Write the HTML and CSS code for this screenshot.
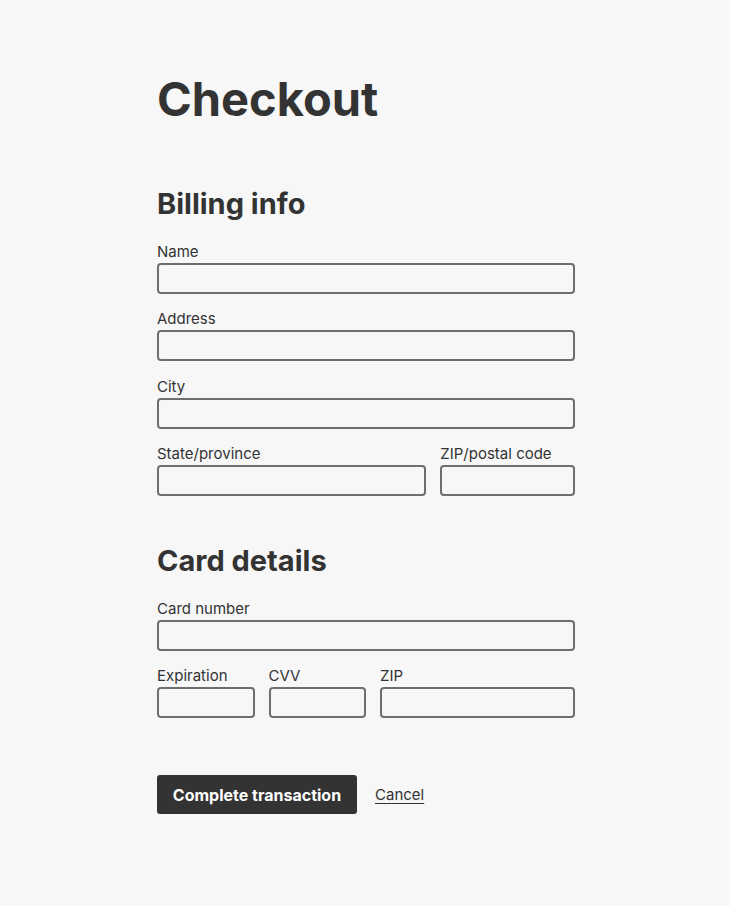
FILE: index.html
```html
<!DOCTYPE html>
<html lang="en">
<head>
<meta charset="utf-8">
<title>Checkout</title>
<link rel="stylesheet" href="styles.css">
</head>
<body>
<main class="page">
  <h1 class="title">Checkout</h1>
  <form class="form">
    <section class="section">
      <h2 class="section-title">Billing info</h2>
      <div class="field">
        <label class="label" for="name">Name</label>
        <input class="input" id="name" type="text">
      </div>
      <div class="field">
        <label class="label" for="address">Address</label>
        <input class="input" id="address" type="text">
      </div>
      <div class="field">
        <label class="label" for="city">City</label>
        <input class="input" id="city" type="text">
      </div>
      <div class="row row-state">
        <div class="field">
          <label class="label" for="state">State/province</label>
          <input class="input" id="state" type="text">
        </div>
        <div class="field">
          <label class="label" for="zip">ZIP/postal code</label>
          <input class="input" id="zip" type="text">
        </div>
      </div>
    </section>
    <section class="section">
      <h2 class="section-title">Card details</h2>
      <div class="field">
        <label class="label" for="card">Card number</label>
        <input class="input" id="card" type="text">
      </div>
      <div class="row row-card">
        <div class="field">
          <label class="label" for="exp">Expiration</label>
          <input class="input" id="exp" type="text">
        </div>
        <div class="field">
          <label class="label" for="cvv">CVV</label>
          <input class="input" id="cvv" type="text">
        </div>
        <div class="field">
          <label class="label" for="czip">ZIP</label>
          <input class="input" id="czip" type="text">
        </div>
      </div>
    </section>
    <div class="actions">
      <button class="btn" type="button">Complete transaction</button>
      <a class="cancel" href="#">Cancel</a>
    </div>
  </form>
</main>
</body>
</html>
```

FILE: styles.css
```css
html, body {
  margin: 0;
  padding: 0;
  background: #f7f7f7;
}
body {
  font-family: Inter, "Noto Sans", sans-serif;
  color: #333333;
}
.page {
  width: 418px;
  padding: 71px 0 0 157px;
}
.title {
  margin: 0;
  font-size: 47px;
  line-height: 56px;
  font-weight: 700;
}
.form {
  margin-top: 60px;
}
.section {
  display: flex;
  flex-direction: column;
  gap: 16.5px;
}
.section + .section {
  margin-top: 48px;
}
.section-title {
  margin: 0 0 5px;
  font-size: 29px;
  line-height: 34px;
  font-weight: 700;
}
.field {
  display: flex;
  flex-direction: column;
  gap: 2px;
  min-width: 0;
}
.label {
  font-size: 15px;
  line-height: 18px;
}
.input {
  box-sizing: border-box;
  height: 31px;
  width: 100%;
  margin: 0;
  border: 2px solid #6e6e6e;
  border-radius: 4px;
  background: #f7f7f7;
  font: inherit;
  padding: 0 8px;
}
.row {
  display: grid;
  gap: 14px;
}
.row-state {
  grid-template-columns: 2fr 1fr;
}
.row-card {
  grid-template-columns: 1fr 1fr 2fr;
}
.actions {
  margin-top: 57px;
  display: flex;
  align-items: center;
  gap: 18px;
}
.btn {
  height: 39px;
  width: 200px;
  border: none;
  border-radius: 3px;
  background: #333333;
  color: #ffffff;
  font-family: Inter, "Noto Sans", sans-serif;
  font-size: 16px;
  font-weight: 700;
  padding: 0;
}
.cancel {
  color: #333333;
  font-size: 15px;
  text-decoration: underline;
  text-underline-offset: 3px;
}
```
